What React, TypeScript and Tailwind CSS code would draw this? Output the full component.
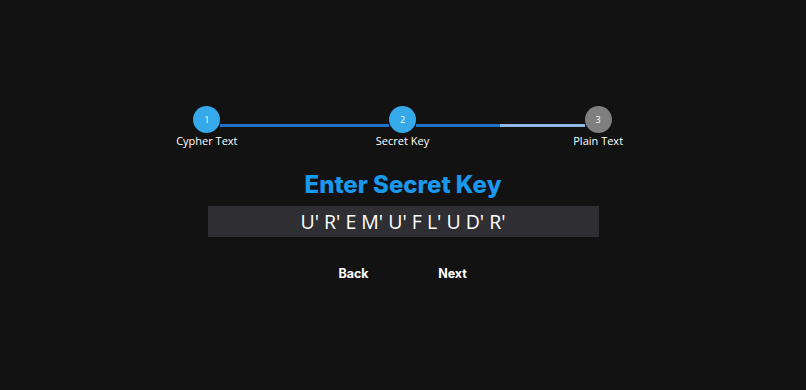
import React from "react";

const font = { fontFamily: '"Open Sans", "Noto Sans", sans-serif' };

function Step({ n, label, left, right, active }: { n: number; label: string; left: string; right: string; active: boolean }) {
  return (
    <div className="flex flex-col items-center">
      <div className="flex w-full">
        <div className={`flex-1 h-[3px] mt-[18px] ${left}`} />
        <div
          className={`w-[27px] h-[27px] rounded-full flex items-center justify-center text-[9px] text-white ${active ? "bg-[#36a9ea]" : "bg-[#7f7f7f]"}`}
        >
          {n}
        </div>
        <div className={`flex-1 h-[3px] mt-[18px] ${right}`} />
      </div>
      <div className="text-[11px] leading-[15px] text-white">{label}</div>
    </div>
  );
}

export default function App() {
  return (
    <div className="w-full h-[390px] bg-[#121212] overflow-hidden" style={font}>
      <div className="pt-[106px] flex flex-col items-center">
        <div className="grid grid-cols-3 w-[587px] ml-[-1px]">
          <Step n={1} label="Cypher Text" left="bg-transparent" right="bg-[#1f72c4]" active />
          <Step n={2} label="Secret Key" left="bg-[#1f72c4]" right="bg-[#1f72c4]" active />
          <Step n={3} label="Plain Text" left="bg-[#8fb8e4]" right="bg-transparent" active={false} />
        </div>
        <h1
          className="mt-[23px] text-[24px] leading-[28px] font-extrabold text-[#1a98ec]"
          style={{ fontFamily: 'Inter, "Noto Sans", sans-serif' }}
        >
          Enter Secret Key
        </h1>
        <div className="mt-[7px] w-[391px] h-[31px] bg-[#2f2f33] flex items-center justify-center text-[19.5px] text-white">
          U' R' E M' U' F L' U D' R'
        </div>
        <div className="mt-[21px] flex gap-[35px]">
          <button
            className="w-[64px] py-[6px] text-[12.5px] leading-[20px] font-bold text-white"
            style={{ fontFamily: 'Inter, "Noto Sans", sans-serif' }}
          >
            Back
          </button>
          <button
            className="w-[64px] py-[6px] text-[12.5px] leading-[20px] font-bold text-white"
            style={{ fontFamily: 'Inter, "Noto Sans", sans-serif' }}
          >
            Next
          </button>
        </div>
      </div>
    </div>
  );
}
